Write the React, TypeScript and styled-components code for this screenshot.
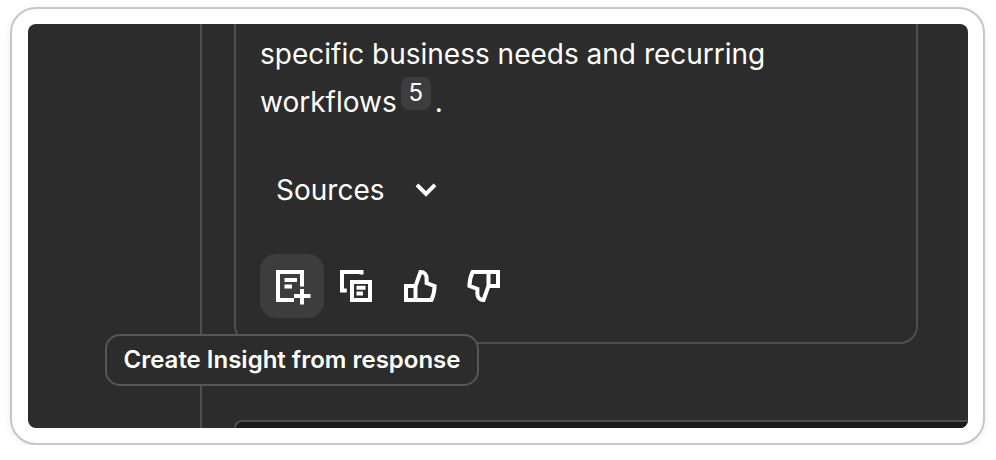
import React from "react";
import styled, { createGlobalStyle } from "styled-components";

const GlobalStyle = createGlobalStyle`
  html, body {
    margin: 0;
    background: #fff;
  }
`;

const Frame = styled.div`
  box-sizing: border-box;
  width: 975px;
  height: 438px;
  margin: 7px 0 0 10px;
  padding: 15px 15px 15px 16px;
  background: #fff;
  border: 2px solid #c6c6c6;
  border-radius: 26px;
  box-shadow: 0 2px 8px rgba(0, 0, 0, 0.07);
  font-family: Inter, "Liberation Sans", sans-serif;
`;

const Panel = styled.div`
  position: relative;
  height: 100%;
  overflow: hidden;
  background: #2c2c2c;
  border-radius: 8px;
  color: #fff;
`;

const Thread = styled.div`
  box-sizing: border-box;
  display: flex;
  flex-direction: column;
  gap: 76px;
  height: 100%;
  margin-left: 172px;
  padding-left: 32px;
  border-left: 2px solid #4f4f4f;
`;

const ResponseCard = styled.div`
  box-sizing: border-box;
  flex: none;
  width: 684px;
  padding: 6px 0 24px 24px;
  border: 2px solid #4f4f4f;
  border-top: none;
  border-radius: 0 0 18px 18px;
`;

const Paragraph = styled.p`
  margin: 0;
  font-size: 28px;
  line-height: 48px;
`;

const Citation = styled.span`
  display: inline-flex;
  align-items: center;
  justify-content: center;
  width: 30px;
  height: 33px;
  margin: -4px 4px 0;
  border-radius: 8px;
  background: #3d3d3d;
  font-size: 24px;
  vertical-align: 11px;
`;

const SourcesToggle = styled.button`
  display: flex;
  align-items: center;
  gap: 29px;
  height: 44px;
  margin: 42px 0 0;
  padding: 0 0 0 16px;
  border: none;
  background: none;
  color: #fff;
  font: inherit;
  font-size: 28px;
`;

const Actions = styled.div`
  display: flex;
  margin-top: 42px;
`;

const ActionButton = styled.button<{ $active?: boolean }>`
  display: flex;
  align-items: center;
  justify-content: center;
  width: 64px;
  height: 64px;
  padding: 0;
  border: none;
  border-radius: 16px;
  background: ${(p) => (p.$active ? "#3d3d3d" : "transparent")};
  color: #fff;
`;

const Icon = styled.svg<{ $flip?: boolean }>`
  display: block;
  width: 40px;
  height: 40px;
  fill: none;
  stroke: currentColor;
  stroke-width: 4;
  transform: ${(p) => (p.$flip ? "rotate(180deg)" : "none")};
`;

const NextCard = styled.div`
  flex: 1;
  border-top: 2px solid #4f4f4f;
  border-left: 2px solid #4f4f4f;
  border-radius: 18px 0 0 0;
  background: #1a1a1a;
`;

const Tooltip = styled.div`
  position: absolute;
  left: 77px;
  top: 310px;
  box-sizing: border-box;
  width: 374px;
  height: 52px;
  padding-bottom: 2px;
  display: flex;
  align-items: center;
  justify-content: center;
  background: #2c2c2c;
  border: 2px solid #575757;
  border-radius: 15px;
  font-size: 24px;
  font-weight: 600;
  white-space: nowrap;
`;

const InsightIcon = () => (
  <Icon viewBox="0 0 40 40">
    <path d="M30 20.5V6H6V34H22" />
    <path d="M12.5 14H25M12.5 20.5H20" />
    <path d="M22 30H38.5M30 23V38.5" />
  </Icon>
);

const CopyIcon = () => (
  <Icon viewBox="0 0 40 40">
    <path d="M10.8 24.5H6V6H25.5V8.5" />
    <rect x="16" y="16" width="18" height="18" />
    <path d="M20.5 21.8H29.5M20.5 27.6H27" />
  </Icon>
);

const ThumbIcon = ({ flip }: { flip?: boolean }) => (
  <Icon viewBox="0 0 40 40" $flip={flip}>
    <path d="M15.5 20H6V34H15.5V20L20.5 6C24 5.8 26.6 8.5 26.6 12V17L34.6 20C34.4 25 33.4 30 31.4 34H15.5" />
  </Icon>
);

const ChevronIcon = () => (
  <svg width="24" height="16" viewBox="0 0 24 16" fill="none" stroke="currentColor" strokeWidth="4">
    <path d="M3 2.8L12 11.8L21 2.8" />
  </svg>
);

export default function App() {
  return (
    <>
      <GlobalStyle />
      <Frame>
        <Panel>
          <Thread>
            <ResponseCard>
              <Paragraph>
                specific business needs and recurring
                <br />
                workflows<Citation>5</Citation>.
              </Paragraph>
              <SourcesToggle>
                Sources
                <ChevronIcon />
              </SourcesToggle>
              <Actions>
                <ActionButton $active>
                  <InsightIcon />
                </ActionButton>
                <ActionButton>
                  <CopyIcon />
                </ActionButton>
                <ActionButton>
                  <ThumbIcon />
                </ActionButton>
                <ActionButton>
                  <ThumbIcon flip />
                </ActionButton>
              </Actions>
            </ResponseCard>
            <NextCard />
          </Thread>
          <Tooltip>Create Insight from response</Tooltip>
        </Panel>
      </Frame>
    </>
  );
}
